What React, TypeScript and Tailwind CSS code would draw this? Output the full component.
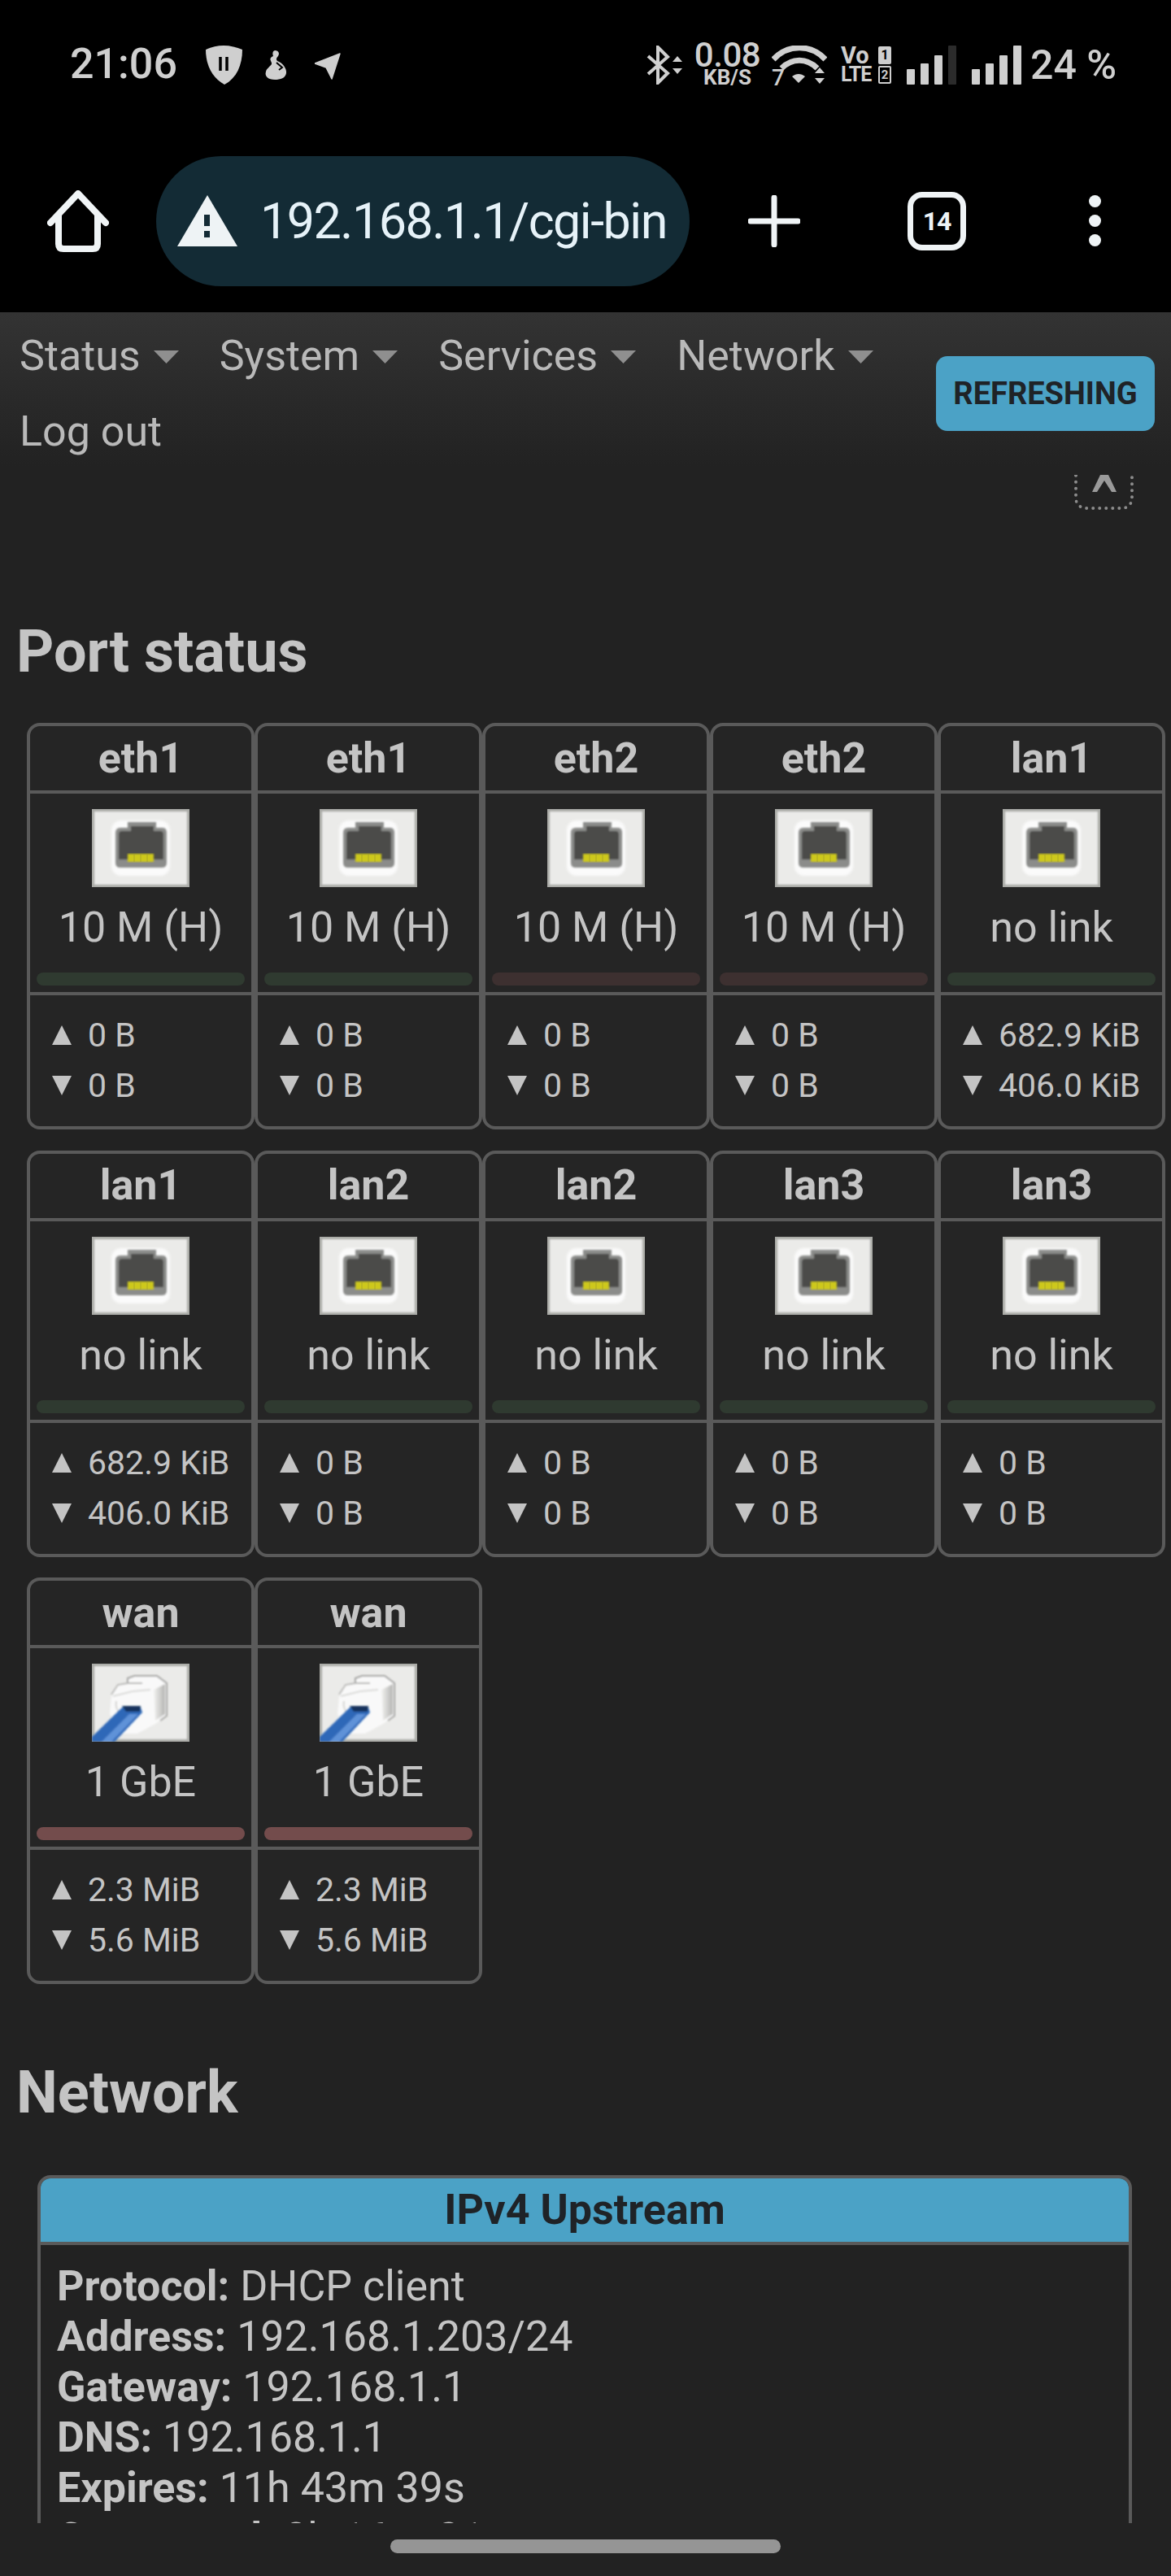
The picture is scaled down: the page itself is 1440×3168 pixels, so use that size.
import React from "react";

const PortDown = () => (
  <svg width="120" height="96" viewBox="0 0 120 96" className="block">
    <defs>
      <filter id="pd" x="-10%" y="-10%" width="120%" height="120%"><feGaussianBlur stdDeviation="1.6" /></filter>
      <filter id="pd2" x="-10%" y="-10%" width="120%" height="120%"><feGaussianBlur stdDeviation="1" /></filter>
    </defs>
    <rect width="120" height="96" fill="#a9aaa6" />
    <rect x="3" y="3" width="114" height="90" fill="#ebebe9" filter="url(#pd2)" />
    <rect x="24" y="14" width="72" height="68" rx="12" fill="#fbfbfb" filter="url(#pd)" />
    <g filter="url(#pd2)">
      <path d="M44 16H79V23H87Q92 23 92 29V66Q92 72 86 72H35Q29 72 29 66V29Q29 23 35 23H44Z" fill="#8b8c8a" />
      <path d="M48 21H76V27H84Q88 27 88 31V62H33V31Q33 27 37 27H48Z" fill="#4c4c4a" />
    </g>
    <rect x="44" y="55" width="32" height="10" fill="#cdc81e" filter="url(#pd2)" />
    <path d="M52 55V65M60 55V65M68 55V65" stroke="#a09c28" strokeWidth="1" opacity="0.7" />
  </svg>
);

const PortUp = () => (
  <svg width="120" height="96" viewBox="0 0 120 96" className="block">
    <defs>
      <filter id="pu" x="-10%" y="-10%" width="120%" height="120%"><feGaussianBlur stdDeviation="1" /></filter>
      <linearGradient id="pus" x1="0" y1="0" x2="1" y2="0">
        <stop offset="0" stopColor="#f2f2f0" />
        <stop offset="1" stopColor="#b4b4b2" />
      </linearGradient>
    </defs>
    <rect width="120" height="96" fill="#a9aaa6" />
    <rect x="3" y="3" width="114" height="90" fill="#ebebe9" filter="url(#pu)" />
    <g filter="url(#pu)">
      <path d="M24 40L32 26L44 24V18L52 15H80L92 24V64L78 74L56 86H38L22 62Z" fill="#f9f9f9" />
      <path d="M44 24V18L52 15H80L92 24V64L84 70" fill="none" stroke="#a2a2a0" strokeWidth="2" />
      <path d="M24 38L32 26L44 24M44 24H62" fill="none" stroke="#b6b6b4" strokeWidth="1.8" />
      <path d="M26 40L50 34L72 32" fill="none" stroke="#dadad8" strokeWidth="2" />
      <path d="M76 32L90 25V62L78 70Z" fill="url(#pus)" />
      <path d="M30 46Q28 56 36 62" fill="none" stroke="#d4d4d2" strokeWidth="2" />
    </g>
    <g filter="url(#pu)">
      <path d="M0 96V90L37 54H60L62 60L28 96Z" fill="#2f68b8" />
      <path d="M12 96L46 62H57L24 96Z" fill="#5f92d8" />
      <path d="M37 52H60L59 59H42Z" fill="#12305c" />
    </g>
  </svg>
);

const Tri = ({ down }: { down?: boolean }) => (
  <svg width="24" height="24" viewBox="0 0 24 24" className="mr-[20px] shrink-0">
    <path d={down ? "M0 0H24L12 24Z" : "M12 0L24 24H0Z"} fill="#c4c4c4" />
  </svg>
);

type P = { name: string; label: string; bar: string; up: string; down: string; linked?: boolean };

const Card = ({ p }: { p: P }) => (
  <div className="h-[500px] w-[280px] rounded-[16px] border-[4px] border-[#5a5a5a] flex flex-col bg-[#252525] text-[#c4c4c4]">
    <div className="h-[83px] flex items-center justify-center text-[52px] font-bold border-b-[4px] border-[#5a5a5a] leading-none">{p.name}</div>
    <div className="h-[248px] flex flex-col items-center border-b-[4px] border-[#5a5a5a]">
      <div className="mt-[19px]">{p.linked ? <PortUp /> : <PortDown />}</div>
      <div className="mt-[15px] text-[52px] leading-[70px] h-[70px] whitespace-nowrap">{p.label}</div>
      <div className={`mt-[20px] w-[256px] h-[16px] rounded-full ${p.bar}`} />
    </div>
    <div className="flex-1 pl-[27px] pt-[18px] text-[41px] leading-[62px]">
      <div className="flex items-center h-[62px] whitespace-nowrap"><Tri />{p.up}</div>
      <div className="flex items-center h-[62px] whitespace-nowrap"><Tri down />{p.down}</div>
    </div>
  </div>
);

const G = "bg-[#2f3a30]";
const R = "bg-[#3d3030]";
const W = "bg-[#734c4c]";

const ports: P[] = [
  { name: "eth1", label: "10 M (H)", bar: G, up: "0 B", down: "0 B" },
  { name: "eth1", label: "10 M (H)", bar: G, up: "0 B", down: "0 B" },
  { name: "eth2", label: "10 M (H)", bar: R, up: "0 B", down: "0 B" },
  { name: "eth2", label: "10 M (H)", bar: R, up: "0 B", down: "0 B" },
  { name: "lan1", label: "no link", bar: G, up: "682.9 KiB", down: "406.0 KiB" },
  { name: "lan1", label: "no link", bar: G, up: "682.9 KiB", down: "406.0 KiB" },
  { name: "lan2", label: "no link", bar: G, up: "0 B", down: "0 B" },
  { name: "lan2", label: "no link", bar: G, up: "0 B", down: "0 B" },
  { name: "lan3", label: "no link", bar: G, up: "0 B", down: "0 B" },
  { name: "lan3", label: "no link", bar: G, up: "0 B", down: "0 B" },
  { name: "wan", label: "1 GbE", bar: W, up: "2.3 MiB", down: "5.6 MiB", linked: true },
  { name: "wan", label: "1 GbE", bar: W, up: "2.3 MiB", down: "5.6 MiB", linked: true },
];

const Signal = ({ dim }: { dim?: boolean }) => (
  <svg width="61" height="48" viewBox="0 0 61 48" className="block">
    <rect x="0" y="29" width="10" height="19" rx="1" fill="#cfcfcf" />
    <rect x="17" y="22" width="10" height="26" rx="1" fill="#cfcfcf" />
    <rect x="34" y="12" width="10" height="36" rx="1" fill="#cfcfcf" />
    <rect x="51" y="0" width="10" height="48" rx="1" fill={dim ? "#2b2b2b" : "#cfcfcf"} />
  </svg>
);

const NavItem = ({ t }: { t: string }) => (
  <span className="inline-flex items-center mr-[50px] h-[93px] whitespace-nowrap">
    {t}
    <svg width="31" height="16" viewBox="0 0 31 16" className="ml-[16px] mt-[2px]"><path d="M0 0H31L15.5 16Z" fill="#8f8f8f" /></svg>
  </span>
);

const Row = ({ k, v }: { k: string; v: string }) => (
  <div className="h-[62px] leading-[62px] whitespace-nowrap"><b className="font-bold">{k}:</b> {v}</div>
);

export default function App() {
  return (
    <div className="relative w-[1440px] h-[3168px] bg-[#222222] overflow-hidden font-['Roboto',sans-serif]">
      <div className="h-[384px] bg-black flex flex-col">
        <div className="h-[160px] flex items-start relative text-[#cfcfcf]">
          <div className="ml-[86px] mt-[48px] text-[52px] leading-[61px] font-medium w-[167px]">21:06</div>
          <svg width="45" height="48" viewBox="0 0 45 48" className="mt-[56px]">
            <path d="M22 0C30 0 38 2 45 5C45 24 38 40 23 48C8 40 0 24 0 5C6 2 14 0 22 0Z" fill="#cfcfcf" />
            <path d="M18 14V31M26 14V31" stroke="#000" strokeWidth="3.5" />
          </svg>
          <svg width="30" height="36" viewBox="0 0 30 36" className="mt-[62px] ml-[27px]">
            <path d="M13 0C18 0 19 4 17 7C15 9 14 11 16 13C22 15 28 22 27 28C26 34 20 36 13 36C5 36 0 32 2 26C3 22 7 20 9 17C10 14 5 11 9 8L11 7C10 4 10 1 13 0Z" fill="#cfcfcf" />
            <path d="M15 15L22 21L18 24" fill="none" stroke="#000" strokeWidth="2" />
          </svg>
          <svg width="32" height="33" viewBox="0 0 32 33" className="mt-[65px] ml-[32px]">
            <path d="M31 1L21 32L14 18L0 13Z" fill="#cfcfcf" stroke="#cfcfcf" strokeWidth="1.5" strokeLinejoin="round" />
          </svg>
          <svg width="48" height="48" viewBox="0 0 48 48" className="mt-[56px] ml-[375px]">
            <path d="M3 13L27 34L15 46V2L27 14L3 35" fill="none" stroke="#cfcfcf" strokeWidth="4" />
            <path d="M33 20L39 13L45 20ZM33 28L39 35L45 28Z" fill="#cfcfcf" />
          </svg>
          <div className="mt-[51px] ml-[13px] w-[79px] flex flex-col items-center">
            <div className="text-[42px] leading-[34px] font-medium tracking-[-0.5px]">0.08</div>
            <div className="text-[26px] leading-[20px] font-bold">KB/S</div>
          </div>
          <svg width="68" height="50" viewBox="0 0 68 50" className="mt-[56px] ml-[15px]">
            <path d="M2 17C20 -2 48 -2 66 17" fill="none" stroke="#cfcfcf" strokeWidth="7" />
            <path d="M12 28C25 15 43 15 56 28" fill="none" stroke="#cfcfcf" strokeWidth="7" />
            <path d="M25 38L33 46L41 38C36 34 30 34 25 38Z" fill="#cfcfcf" />
            <path d="M53 34L59 27L65 34ZM53 40L59 47L65 40Z" fill="#cfcfcf" />
            <text x="0" y="49" fontSize="28" fontWeight="500" fill="#cfcfcf">7</text>
          </svg>
          <div className="mt-[56px] ml-[17px] w-[62px] flex flex-col font-bold">
            <div className="flex items-center justify-between h-[24px] text-[29px] leading-[24px]">Vo<span className="w-[16px] h-[22px] rounded-[2px] bg-[#cfcfcf] text-black text-[16px] leading-[22px] text-center">1</span></div>
            <div className="flex items-center justify-between h-[24px] text-[25px] leading-[24px] tracking-[-1px]">LTE<span className="w-[16px] h-[22px] rounded-[2px] border-[2px] border-[#cfcfcf] text-[15px] leading-[18px] text-center tracking-normal">2</span></div>
          </div>
          <div className="mt-[56px] ml-[19px]"><Signal dim /></div>
          <div className="mt-[56px] ml-[19px]"><Signal /></div>
          <div className="mt-[51px] ml-[11px] text-[50px] leading-[58px] font-medium whitespace-nowrap">24 %</div>
        </div>
        <div className="h-[224px] flex items-start text-[#eef3f5]">
          <svg width="76" height="76" viewBox="0 0 76 76" className="mt-[74px] ml-[58px]">
            <path d="M4 40L38 4L72 40M14 30V66Q14 72 20 72H56Q62 72 62 66V30" fill="none" stroke="#f0f4f6" strokeWidth="8" strokeLinecap="round" strokeLinejoin="round" />
          </svg>
          <div className="mt-[32px] ml-[58px] w-[656px] h-[160px] rounded-full bg-[#132b35] flex items-center">
            <svg width="74" height="64" viewBox="0 0 74 64" className="ml-[26px]">
              <path d="M37 0L74 63H0Z" fill="#eef3f5" />
              <rect x="33" y="24" width="7" height="14" fill="#132b35" />
              <rect x="33" y="44" width="7" height="8" fill="#132b35" />
            </svg>
            <div className="ml-[28px] w-[505px] text-[61px] leading-[80px] font-normal tracking-[-1.5px] whitespace-nowrap text-[#e6f2f8]">192.168.1.1/cgi-bin</div>
          </div>
          <svg width="64" height="64" viewBox="0 0 64 64" className="mt-[80px] ml-[72px]">
            <path d="M32 3V61M3 32H61" stroke="#f0f4f6" strokeWidth="7" strokeLinecap="round" />
          </svg>
          <div className="mt-[76px] ml-[132px] w-[72px] h-[72px] rounded-[18px] border-[7px] border-[#f0f4f6] flex items-center justify-center text-[32px] font-bold tracking-[-1px]">14</div>
          <div className="mt-[80px] ml-[151px] flex flex-col gap-[9px]">
            <div className="w-[15px] h-[15px] rounded-full bg-[#eef3f5]" />
            <div className="w-[15px] h-[15px] rounded-full bg-[#eef3f5]" />
            <div className="w-[15px] h-[15px] rounded-full bg-[#eef3f5]" />
          </div>
        </div>
      </div>

      <div className="h-[2719px] overflow-hidden bg-gradient-to-b from-[#333333] to-[#222222] bg-[length:100%_190px] bg-no-repeat">
        <div className="flex justify-between">
          <div className="w-[1145px] pl-[24px] pt-[7px] text-[52px] leading-[93px] text-[#b9b9b9]">
            <NavItem t="Status" />
            <NavItem t="System" />
            <NavItem t="Services" />
            <NavItem t="Network" />
            <div className="h-[93px]">Log out</div>
          </div>
          <div className="flex flex-col items-end pr-[20px]">
            <div className="mt-[54px] w-[269px] h-[92px] rounded-[14px] bg-[#4ba2c6] text-[#1f2327] text-[38px] font-bold flex items-center justify-center whitespace-nowrap">REFRESHING</div>
            <div className="mt-[54px] mr-[26px] w-[73px] h-[43px] rounded-b-[14px] border-[4px] border-t-0 border-dotted border-[#8c8c8c] overflow-hidden flex justify-center">
              <svg width="30" height="22" viewBox="0 0 30 22"><path d="M10 0H20L30 21H24L15 7L6 21H0Z" fill="#9a9a9a" /></svg>
            </div>
          </div>
        </div>

        <h2 className="mt-[134px] ml-[20px] text-[72px] leading-[82px] font-bold text-[#c4c4c4]">Port status</h2>
        <div className="mt-[46px] ml-[33px] w-[1400px] grid grid-cols-[repeat(5,280px)] gap-y-[25.5px]">
          {ports.map((p, i) => <Card key={i} p={p} />)}
        </div>

        <h2 className="mt-[93px] ml-[20px] text-[72px] leading-[82px] font-bold text-[#c4c4c4]">Network</h2>
        <div className="mt-[60px] ml-[46px] w-[1346px] rounded-t-[16px] border-[4px] border-b-0 border-[#5a5a5a] bg-[#222222] text-[#c4c4c4]">
          <div className="h-[82px] bg-[#4ba2c6] rounded-t-[12px] border-b-[4px] border-[#5a5a5a] flex items-center justify-center text-[52px] font-bold text-[#1f2327]">IPv4 Upstream</div>
          <div className="pl-[20px] pt-[20px] text-[52px]">
            <Row k="Protocol" v="DHCP client" />
            <Row k="Address" v="192.168.1.203/24" />
            <Row k="Gateway" v="192.168.1.1" />
            <Row k="DNS" v="192.168.1.1" />
            <Row k="Expires" v="11h 43m 39s" />
            <Row k="Connected" v="0h 16m 21s" />
          </div>
        </div>
      </div>

      <div className="absolute left-0 top-[3103px] w-[1440px] h-[65px] bg-[#222222]">
        <div className="mt-[20px] mx-auto w-[480px] h-[17px] rounded-full bg-[#959595]" />
      </div>
    </div>
  );
}
